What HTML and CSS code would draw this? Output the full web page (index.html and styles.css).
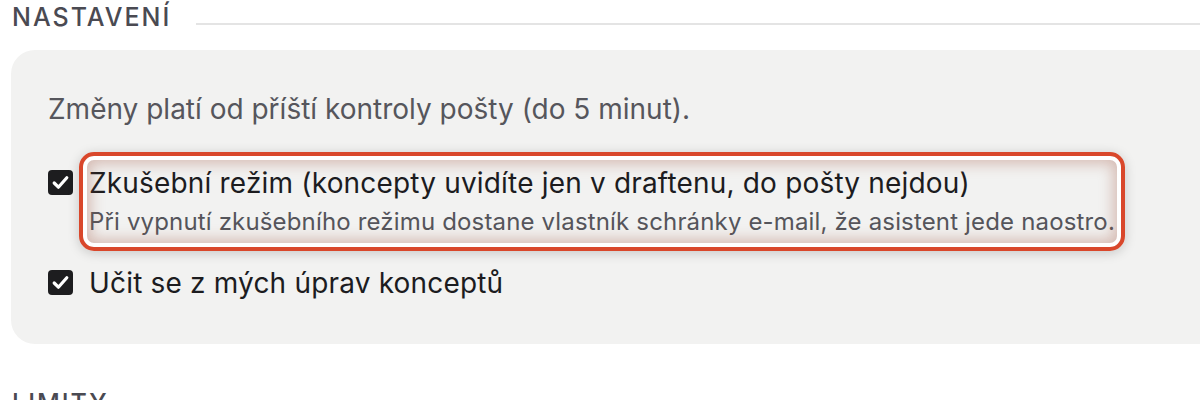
FILE: index.html
```html
<!DOCTYPE html>
<html lang="cs">
<head>
<meta charset="utf-8">
<link rel="stylesheet" href="styles.css">
</head>
<body>
<section class="section">
  <div class="section-head">
    <h2 class="section-title">NASTAVENÍ</h2>
    <div class="section-rule"></div>
  </div>
  <div class="card">
    <p class="note">Změny platí od příští kontroly pošty (do 5 minut).</p>
    <div class="option">
      <span class="check"><svg viewBox="0 0 25 25" width="25" height="25"><path d="M6.2 13 L10.4 17.2 L18.8 7.8" fill="none" stroke="#fff" stroke-width="3.2" stroke-linecap="round" stroke-linejoin="round"/></svg></span>
      <div class="option-text">
        <div class="option-label">Zkušební režim (koncepty uvidíte jen v draftenu, do pošty nejdou)</div>
        <div class="option-hint">Při vypnutí zkušebního režimu dostane vlastník schránky e-mail, že asistent jede naostro.</div>
        <div class="highlight"></div>
      </div>
    </div>
    <div class="option">
      <span class="check"><svg viewBox="0 0 25 25" width="25" height="25"><path d="M6.2 13 L10.4 17.2 L18.8 7.8" fill="none" stroke="#fff" stroke-width="3.2" stroke-linecap="round" stroke-linejoin="round"/></svg></span>
      <div class="option-text">
        <div class="option-label">Učit se z mých úprav konceptů</div>
      </div>
    </div>
  </div>
</section>
<section class="section">
  <div class="section-head">
    <h2 class="section-title">LIMITY</h2>
    <div class="section-rule"></div>
  </div>
</section>
</body>
</html>
```

FILE: styles.css
```css
html, body {
  margin: 0;
  padding: 0;
  background: #ffffff;
  overflow: hidden;
}
body {
  font-family: "Inter", "Noto Sans", sans-serif;
  color: #1c1c1f;
}
.section {
  padding: 0 0 0 11px;
}
.section-head {
  display: flex;
  align-items: flex-start;
  gap: 25px;
  padding-top: 2px;
}
.section-title {
  margin: 0 0 0 1px;
  font-size: 25px;
  font-weight: 500;
  letter-spacing: 2px;
  line-height: 30px;
  color: #4a4a52;
}
.section-rule {
  flex: 1;
  height: 2px;
  margin-top: 21px;
  background: #e4e4e4;
}
.card {
  margin-top: 18px;
  margin-right: -40px;
  margin-bottom: 42px;
  background: #f2f2f1;
  border-radius: 24px;
  padding: 42px 36px 44px 37px;
}
.note {
  margin: 0 0 40px 0;
  font-size: 28px;
  line-height: 34px;
  color: #56565c;
}
.option {
  display: flex;
  align-items: flex-start;
  gap: 16px;
  margin-bottom: 29px;
}
.option:last-child {
  margin-bottom: 0;
}
.check {
  flex: none;
  width: 25px;
  height: 25px;
  margin-top: 4px;
  border-radius: 4px;
  background: #1d1d1f;
  display: flex;
}
.option-text {
  position: relative;
}
.option-label {
  font-size: 28px;
  line-height: 34px;
  letter-spacing: 0.18px;
  color: #1c1c1f;
}
.option-hint {
  margin-top: 7px;
  font-size: 24px;
  line-height: 30px;
  letter-spacing: 0.16px;
  color: #55555b;
}
.highlight {
  position: absolute;
  top: -14px;
  left: -10px;
  right: -10px;
  bottom: -14px;
  border: 4.5px solid #d9472b;
  border-radius: 15px;
  box-shadow: inset 0 0 0 4px #ffffff, inset 0 0 14px 8px rgba(160, 85, 65, 0.34), 0 2px 12px rgba(0, 0, 0, 0.18);
  pointer-events: none;
}
```
